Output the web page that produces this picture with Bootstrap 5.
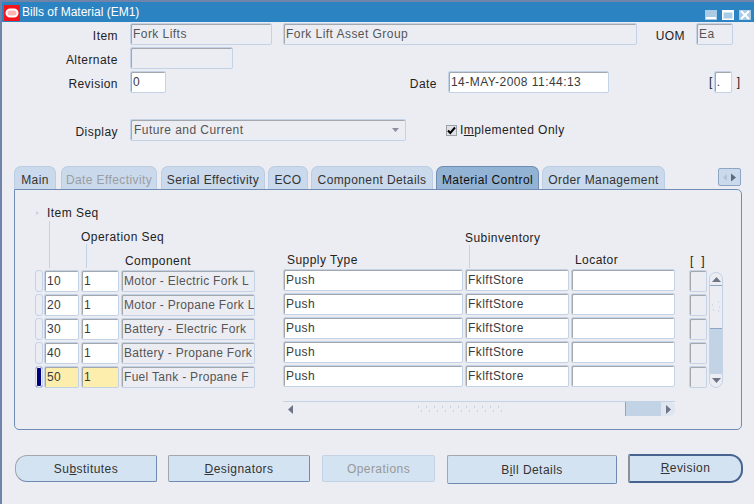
<!DOCTYPE html>
<html lang="en">
<head>
<meta charset="utf-8">
<title>Bills of Material (EM1)</title>
<link rel="stylesheet" href="https://cdn.jsdelivr.net/npm/bootstrap@5.3.0/dist/css/bootstrap.min.css">
<style>
html,body{margin:0;padding:0;background:#ecedf3;overflow:hidden}
body{font:12px/1 "Liberation Sans",Arial,sans-serif;letter-spacing:.45px;color:#222}
.win{width:754px;height:504px;background:#ecedf3;border-top:2px solid #6f84a8;border-left:2px solid #6f84a8;overflow:hidden}
.ttl{height:20px;flex:none;background:#2b83c1;color:#fff;font-size:12px;letter-spacing:0}
.ttl .logo{width:16px;height:16px;margin:2px 2px 0 2px;display:block;flex:none}
.wbtn{display:flex;gap:5px;margin:5px 3px 0 auto}
.wbtn svg{display:block;width:12px;height:10px}
.frm{padding-top:1px;gap:2px;flex:none}
.frow{height:22px;gap:11px;align-items:center}
.lbl{text-align:right;white-space:nowrap;flex:none;padding-top:3px}
.l116{width:116px;margin-right:1px}
.l37{width:37px}.l260{width:260px}
.form-control.fld,.form-select.fld{height:22px;min-height:0;padding:0 2px 0 2px;font-size:12px;line-height:20px;color:#3a3a3a;background:#fff;background-image:none;border:1px solid #c3d2e4;border-radius:2px;box-shadow:inset 1px 1px 0 #a2a8ae;white-space:nowrap;overflow:hidden;flex:none;letter-spacing:.45px}
.fld.ro{background:#ecedf3;color:#555}
.fld.cur{background:#fdeeae}
.form-control.fld.cmp{letter-spacing:.3px;padding-right:0}
.w142{width:142px}.w354{width:354px}.w37{width:37px}.w103{width:103px}.w36{width:36px}.w161{width:161px}.w18{width:18px}
.brk{display:flex;align-items:center;gap:1px;margin-left:89px}
.mt24{margin-top:24px}
.form-select.fld.dsp{width:276px;display:flex;align-items:center;justify-content:space-between;padding:0 6px 0 3px}
.form-check-input.chk{width:11px;height:11px;margin:0 -8px 0 29px;flex:none;border:1px solid #9aa0a6;border-radius:0;background-color:#dfe1e6;box-shadow:none;background-size:11px}
.form-check-input.chk:checked{background-color:#dfe1e6;border-color:#9aa0a6;background-image:url("data:image/svg+xml,%3csvg xmlns='http://www.w3.org/2000/svg' viewBox='0 0 11 11'%3e%3cpath fill='none' stroke='%23000' stroke-width='2' d='M2 5.5l2.3 2.5L9 2.5'/%3e%3c/svg%3e")}
.nav-tabs.tbs{margin:25px 0 0 12px;border:0;height:23px;flex:none;flex-wrap:nowrap;width:728px}
.tbs .nav-link,.tbs .nav-link.disabled{height:23px;padding:7px 0 0;margin:0;text-align:center;font-size:12px;letter-spacing:.4px;color:#333;background:#cad9eb;border:1px solid #bccde2;border-bottom:0;border-radius:7px 7px 0 0;white-space:nowrap}
.tbs .nav-link.disabled{color:#9a9ea3}
.tbs .nav-link.active{background:#93b3d4;color:#111;border-color:#6f8db3}
.t1{width:42px;margin-right:5px}.t2{width:96px;margin-right:4px}.t3{width:104px;margin-right:3px}.t4{width:40px;margin-right:3px}.t5{width:122px;margin-right:3px}.t6{width:103px;margin-right:3px}.t7{width:123px}
.tscr{width:23px;height:18px;margin:2px 0 0 53px;background:#cad9eb;border:1px solid #8ea6c4;border-radius:2px;display:flex;align-items:center;justify-content:center}
.pnl{margin-left:12px;width:728px;height:241px;flex:none;border:1px solid #6f8db3;border-radius:0 5px 5px 5px;padding-left:21px}
.grd{display:grid;grid-template-columns:6px 35px 38px 134px 24px 180px 104px 104px 10px 18px 15px;grid-template-rows:78px repeat(5,22px) auto;column-gap:2px;row-gap:2px}
.hd{display:flex;flex-direction:column;justify-content:flex-end;white-space:nowrap;overflow:visible;min-width:0}
.hd .ptx{line-height:14px;height:14px}
.ldr{width:1px;background:#c3d2e4}
.l24{height:24px}.l23{height:23px}.l47{height:47px;margin-top:1px;margin-left:5px}
.pi2{margin-left:2px}.pi4{margin-left:4px}.pi5{margin-left:5px}.pi1{margin-left:1px}
.up1{margin-bottom:1px}
.tri{width:0;height:0;border-left:3px solid #c3d2e4;border-top:2px solid transparent;border-bottom:2px solid transparent;margin:0 8px 0 -11px}
.hi{display:flex;align-items:center;height:14px;margin-left:3px}
.ind{height:22px;width:8px;margin-left:-1px;border:1px solid #c3d2e4;border-radius:3px;background:#ecedf3}
.ind.on{background:#00007f;box-shadow:inset 0 0 0 1px #ecedf3}
.hi1{margin-top:-1px;margin-bottom:1px}
.form-control.fld.w-100{min-width:0}
.vsb{grid-column:11;grid-row:2 / span 5;width:14px;margin:2px 0 0 0;height:116px;border:1px solid #c3d2e4;border-radius:7px;display:flex;flex-direction:column;overflow:hidden;background:#ecedf3}
.vb{height:13px;display:flex;align-items:center;justify-content:center;flex:none}
.vb.t{border-bottom:1px solid #8ea6c4}
.vth{height:43px;flex:none;border-bottom:1px solid #8ea6c4;display:flex;align-items:center;justify-content:center}
.vtr{flex:1;background:#c3d3e6}
.hsb{grid-column:6 / span 3;height:15px;margin-top:11px;display:flex;border-top:1px solid #c3d2e4;background:#ecedf3}
.hb{width:14px;flex:none;display:flex;align-items:center;justify-content:center}
.hth{width:329px;flex:none;display:flex;align-items:center;justify-content:center;border-right:1px solid #8ea6c4}
.htr{flex:1;background:#c3d3e6}
.hbr{background:#dfe6f0;border-radius:0 5px 5px 0}
.bbar{margin:25px 0 0 13px;gap:11px;align-items:flex-start}
.btn.ob{height:27px;padding:1px 0 0;font-size:12px;letter-spacing:.45px;line-height:24px;color:#333;background:#d3e3f2;border:1px solid;border-color:#a3a7ab #6f8ab0 #6f8ab0 #a3a7ab;border-radius:2px;flex:none}
.btn.ob.disabled,.btn.ob:disabled{color:#999;border-color:#c3d2e4;opacity:1;background:#d3e3f2}
.b1{width:142px;border-radius:12px 2px 2px 12px!important}.b2{width:142px}.b3{width:113px;margin-left:1px}.b4{width:170px;margin-left:1px;height:29px!important;line-height:26px!important}
.b5{width:115px;height:29px!important;margin-top:-1px;padding-top:0!important;line-height:25px!important;border-width:2px!important;border-color:#46648f #46648f #46648f #8a9096!important;border-radius:2px 13px 13px 2px!important}
</style>
</head>
<body>
<div class="win d-flex flex-column">
  <div class="ttl d-flex align-items-center">
    <svg class="logo" viewBox="0 0 16 16"><rect width="16" height="16" fill="#f5141c"/><rect x="2.5" y="4.5" width="11" height="7" rx="3.5" fill="#ffb4b4" stroke="#fff" stroke-width="2"/></svg>
    <span>Bills of Material (EM1)</span>
    <div class="wbtn">
      <svg viewBox="0 0 12 10"><rect width="12" height="10" fill="#a9cbe6"/><rect x="1" y="7" width="10" height="2" fill="#fff"/></svg>
      <svg viewBox="0 0 12 10"><rect width="12" height="10" fill="#fff"/><rect x="1.5" y="2.5" width="9" height="6" fill="#a9cbe6"/></svg>
      <svg viewBox="0 0 12 10"><rect width="12" height="10" fill="#a9cbe6"/><path d="M2 1l8 8M10 1L2 9" stroke="#fff" stroke-width="2"/></svg>
    </div>
  </div>
  <div class="frm d-flex flex-column">
    <div class="d-flex frow"><span class="lbl l116">Item</span><div class="form-control fld ro w142">Fork Lifts</div><div class="form-control fld ro w354">Fork Lift Asset Group</div><span class="lbl l37">UOM</span><div class="form-control fld ro w37">Ea</div></div>
    <div class="d-flex frow"><span class="lbl l116">Alternate</span><div class="form-control fld ro w103"></div></div>
    <div class="d-flex frow"><span class="lbl l116">Revision</span><div class="form-control fld w36">0</div><span class="lbl l260">Date</span><div class="form-control fld w161">14-MAY-2008 11:44:13</div><div class="brk"><span>[</span><div class="form-control fld w18">.</div><span class="ms-1">]</span></div></div>
    <div class="d-flex frow mt24"><span class="lbl l116">Display</span><div class="form-select fld ro dsp"><span>Future and Current</span><svg width="7" height="4" viewBox="0 0 7 4"><path d="M0 0h7L3.5 4z" fill="#8b8f9c"/></svg></div><input class="form-check-input chk" type="checkbox" checked aria-label="Implemented Only"><span class="impl">I<u>m</u>plemented Only</span></div>
  </div>
  <ul class="nav nav-tabs tbs">
    <li class="nav-item t1"><a class="nav-link" href="#">Main</a></li>
    <li class="nav-item t2"><a class="nav-link disabled" href="#">Date Effectivity</a></li>
    <li class="nav-item t3"><a class="nav-link" href="#">Serial Effectivity</a></li>
    <li class="nav-item t4"><a class="nav-link" href="#">ECO</a></li>
    <li class="nav-item t5"><a class="nav-link" href="#">Component Details</a></li>
    <li class="nav-item t6"><a class="nav-link active" href="#">Material Control</a></li>
    <li class="nav-item t7"><a class="nav-link" href="#">Order Management</a></li>
    <li class="tscr"><svg width="13" height="9" viewBox="0 0 13 9"><path d="M4 1v7L0 4.5z" fill="#b4c3d6"/><path d="M8 0.5v8l5-4z" fill="#5f6a80"/></svg></li>
  </ul>
  <div class="pnl">
    <div class="grd">
      <div class="hd"></div>
      <div class="hd"><div class="hi"><i class="tri"></i><span>Item Seq</span></div><div class="ldr l47"></div></div>
      <div class="hd"><span class="ptx">Operation Seq</span><div class="ldr l24 pi5"></div></div>
      <div class="hd"><span class="ptx pi4">Component</span></div>
      <div class="hd"></div>
      <div class="hd"><span class="ptx pi4 up1">Supply Type</span></div>
      <div class="hd"><span class="ptx">Subinventory</span><div class="ldr l23 pi4"></div></div>
      <div class="hd"><span class="ptx pi4 up1">Locator</span></div>
      <div class="hd"></div>
      <div class="hd"><span class="ptx pi1">[ &nbsp;]</span></div>
      <div class="hd"></div>

      <div class="ind"></div><div class="form-control fld w-100">10</div><div class="form-control fld w-100">1</div><div class="form-control fld ro w-100 cmp">Motor - Electric Fork L</div><div></div><div class="form-control fld w-100 hi1">Push</div><div class="form-control fld w-100 hi1">FklftStore</div><div class="form-control fld w-100 hi1"></div><div></div><div class="form-control fld ro w-100"></div>
      <div class="vsb">
        <div class="vb t"><svg width="9" height="5" viewBox="0 0 9 5"><path d="M4.5 0L9 5H0z" fill="#6f7487"/></svg></div>
        <div class="vth"><svg width="10" height="12" viewBox="0 0 10 12"><path d="M7 1h1M1 4h1M8 6h1M2 9h1M7 10h1" stroke="#b9c7d9"/></svg></div>
        <div class="vtr"></div>
        <div class="vb"><svg width="9" height="5" viewBox="0 0 9 5"><path d="M0 0h9L4.5 5z" fill="#6f7487"/></svg></div>
      </div>
      <div class="ind"></div><div class="form-control fld w-100">20</div><div class="form-control fld w-100">1</div><div class="form-control fld ro w-100 cmp">Motor - Propane Fork L</div><div></div><div class="form-control fld w-100 hi1">Push</div><div class="form-control fld w-100 hi1">FklftStore</div><div class="form-control fld w-100 hi1"></div><div></div><div class="form-control fld ro w-100"></div>
      <div class="ind"></div><div class="form-control fld w-100">30</div><div class="form-control fld w-100">1</div><div class="form-control fld ro w-100 cmp">Battery - Electric Fork</div><div></div><div class="form-control fld w-100 hi1">Push</div><div class="form-control fld w-100 hi1">FklftStore</div><div class="form-control fld w-100 hi1"></div><div></div><div class="form-control fld ro w-100"></div>
      <div class="ind"></div><div class="form-control fld w-100">40</div><div class="form-control fld w-100">1</div><div class="form-control fld ro w-100 cmp">Battery - Propane Fork</div><div></div><div class="form-control fld w-100 hi1">Push</div><div class="form-control fld w-100 hi1">FklftStore</div><div class="form-control fld w-100 hi1"></div><div></div><div class="form-control fld ro w-100"></div>
      <div class="ind on"></div><div class="form-control fld cur w-100">50</div><div class="form-control fld cur w-100">1</div><div class="form-control fld ro w-100 cmp">Fuel Tank - Propane F</div><div></div><div class="form-control fld w-100 hi1">Push</div><div class="form-control fld w-100 hi1">FklftStore</div><div class="form-control fld w-100 hi1"></div><div></div><div class="form-control fld ro w-100"></div>

      <div class="hsb">
        <div class="hb"><svg width="5" height="9" viewBox="0 0 5 9"><path d="M5 0v9L0 4.5z" fill="#6f7487"/></svg></div>
        <div class="hth"><svg width="90" height="9" viewBox="0 0 90 9"><path d="M2 2h1M10 2h1M18 2h1M26 2h1M34 2h1M42 2h1M50 2h1M58 2h1M66 2h1M74 2h1M82 2h1M5 6h1M13 6h1M21 6h1M29 6h1M37 6h1M45 6h1M53 6h1M61 6h1M69 6h1M77 6h1M85 6h1" stroke="#a9b8cb"/></svg></div>
        <div class="htr"></div>
        <div class="hb hbr"><svg width="5" height="9" viewBox="0 0 5 9"><path d="M0 0v9l5-4.5z" fill="#6f7487"/></svg></div>
      </div>
    </div>
  </div>
  <div class="d-flex bbar">
    <button class="btn ob b1" type="button">Su<u>b</u>stitutes</button>
    <button class="btn ob b2" type="button"><u>D</u>esignators</button>
    <button class="btn ob b3" type="button" disabled>Operations</button>
    <button class="btn ob b4" type="button">B<u>i</u>ll Details</button>
    <button class="btn ob b5" type="button"><u>R</u>evision</button>
  </div>
</div>
<script src="https://cdn.jsdelivr.net/npm/bootstrap@5.3.0/dist/js/bootstrap.bundle.min.js"></script>
</body>
</html>
